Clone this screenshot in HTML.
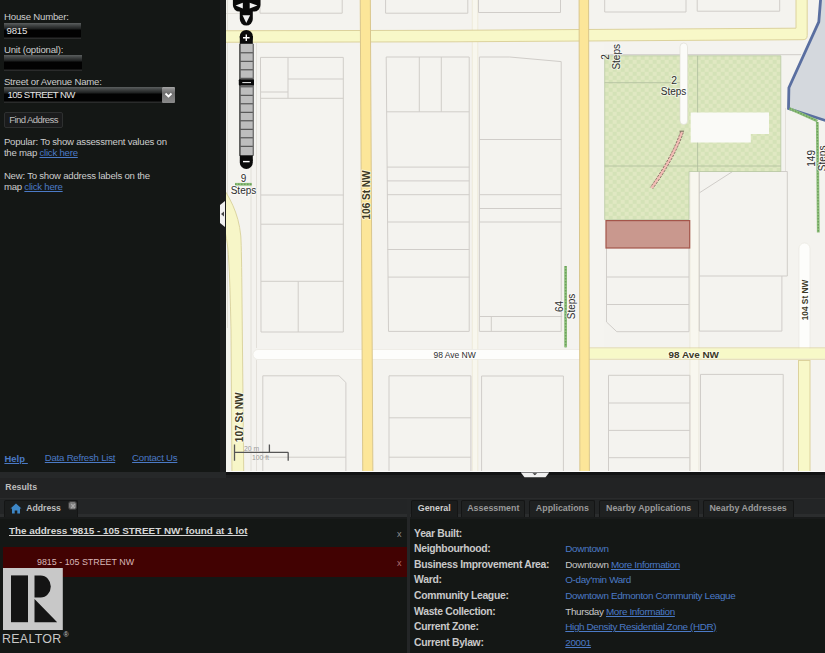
<!DOCTYPE html>
<html><head><meta charset="utf-8">
<style>
html,body{-webkit-font-smoothing:antialiased;margin:0;padding:0;width:825px;height:653px;overflow:hidden;background:#141715;font-family:"Liberation Sans",sans-serif;}
.t{position:absolute;white-space:pre;line-height:14px;}
.t u{text-decoration-thickness:1px;text-underline-offset:1px;}
#left{position:absolute;left:0;top:0;width:220px;height:471.5px;background:#141715;}
#lstrip{position:absolute;left:220px;top:0;width:6px;height:471.5px;background:#1b1c1d;}
.inp{position:absolute;background:linear-gradient(#5b5f5f 0px,#3a3d3d 3px,#1d1f1f 6px,#020202 7px,#020202 14px,#2a2b2b 15px);box-sizing:border-box;border:0;}
.selbtn{position:absolute;background:linear-gradient(#a8a8a8 0,#8c8c8c 2px,#6e6e6e 6px,#8a8a8a 16px);border-radius:1px;}
.btn{position:absolute;box-sizing:border-box;border:1px solid #2e3030;border-radius:2px;background:#1a1b1c;}
#map{position:absolute;left:226px;top:0;width:599px;height:471.5px;overflow:hidden;background:#f4f3ef;}
#gapstrip{position:absolute;left:0;top:471.5px;width:825px;height:6.5px;background:#262829;}
#gapdark{position:absolute;left:226px;top:471.5px;width:599px;height:6.5px;background:linear-gradient(#121314 0,#121314 2.5px,#1f2021 2.5px);}

#reshdr{position:absolute;left:0;top:478px;width:825px;height:20.5px;background:#222324;border-bottom:1px solid #2a2b2c;box-sizing:border-box;}
#tabsL{position:absolute;left:0;top:499px;width:407px;height:19.5px;background:linear-gradient(#232526 0,#232526 15.5px,#2b2d2e 15.5px,#2b2d2e 18px,#191b1b 18px);}
#tabsR{position:absolute;left:410px;top:499px;width:415px;height:19.5px;background:linear-gradient(#232526 0,#232526 15.5px,#2b2d2e 15.5px,#2b2d2e 18px,#191b1b 18px);}
#contL{position:absolute;left:0;top:518.5px;width:407px;height:135px;background:#141715;}
#contR{position:absolute;left:410px;top:518.5px;width:415px;height:135px;background:#141715;}
#divider{position:absolute;left:407px;top:499px;width:3px;height:154px;background:#242627;}
.tab{position:absolute;box-sizing:border-box;border:1px solid #141515;border-bottom:0;border-radius:2px 2px 0 0;background:#1f2121;}
.tab.sel{background:#1b1d1d;}
</style></head><body>
<div id="left"></div><div id="lstrip"></div>
<div style="position:absolute;left:220px;top:201px;width:5px;height:26px;background:#f0f0f0;clip-path:polygon(0 4px,100% 0,100% 100%,0 calc(100% - 4px));"></div>
<svg style="position:absolute;left:220px;top:210px" width="5" height="8"><path d="M1 4 L4 1.5 L4 6.5Z" fill="#444"/></svg>
<div class="t " style="left:4.10px;top:10.37px;font-size:9.6px;font-weight:400;color:#cdcdcd;letter-spacing:-0.2px;">House Number:</div>
<div class="inp" style="left:4px;top:23px;width:77px;height:16px"></div><div class="t " style="left:6.50px;top:24.37px;font-size:9.6px;font-weight:400;color:#e6e6e6;letter-spacing:-0.2px;">9815</div>
<div class="t " style="left:4.00px;top:42.57px;font-size:9.6px;font-weight:400;color:#cdcdcd;letter-spacing:-0.2px;">Unit (optional):</div>
<div class="inp" style="left:4px;top:55px;width:78px;height:16px"></div><div class="t " style="left:3.90px;top:74.57px;font-size:9.6px;font-weight:400;color:#cdcdcd;letter-spacing:-0.2px;">Street or Avenue Name:</div>
<div class="inp" style="left:4px;top:87px;width:158px;height:16px"></div><div class="selbtn" style="left:161.5px;top:86.5px;width:13px;height:16.5px"><svg width="13" height="16" style="position:absolute;left:0;top:0"><path d="M3.5 6.5 L6.5 9.5 L9.5 6.5" stroke="#fff" stroke-width="1.8" fill="none"/></svg></div><div class="t " style="left:7.60px;top:87.67px;font-size:9.6px;font-weight:400;color:#e6e6e6;letter-spacing:-0.6px;">105 STREET NW</div>
<div class="btn" style="left:4px;top:111.5px;width:59px;height:16px"></div><div class="t " style="left:9.20px;top:112.67px;font-size:9.6px;font-weight:400;color:#bdbdbd;letter-spacing:-0.6px;">Find Address</div>
<div class="t " style="left:3.90px;top:135.37px;font-size:9.6px;font-weight:400;color:#cdcdcd;letter-spacing:-0.22px;">Popular: To show assessment values on</div>
<div class="t " style="left:3.90px;top:146.27px;font-size:9.6px;font-weight:400;color:#cdcdcd;letter-spacing:-0.22px;">the map <u style="color:#4b7ac6">click here</u></div>
<div class="t " style="left:3.90px;top:169.17px;font-size:9.6px;font-weight:400;color:#cdcdcd;letter-spacing:-0.22px;">New: To show address labels on the</div>
<div class="t " style="left:3.90px;top:179.67px;font-size:9.6px;font-weight:400;color:#cdcdcd;letter-spacing:-0.22px;">map <u style="color:#4b7ac6">click here</u></div>
<div class="t " style="left:4.40px;top:451.54px;font-size:9.4px;font-weight:700;color:#4b7ac6;letter-spacing:0.1px;"><u>Help&nbsp;</u></div>
<div class="t " style="left:44.80px;top:451.47px;font-size:9.6px;font-weight:400;color:#4b7ac6;letter-spacing:-0.22px;"><u>Data Refresh List</u></div>
<div class="t " style="left:132.10px;top:451.47px;font-size:9.6px;font-weight:400;color:#4b7ac6;letter-spacing:-0.22px;"><u>Contact Us</u></div>

<div id="map">
<svg style="position:absolute;left:-226px;top:0" width="825" height="472" viewBox="0 0 825 472">
<defs>
<pattern id="park" width="8" height="8" patternUnits="userSpaceOnUse" x="604.7" y="55.8">
<rect width="8" height="8" fill="#d4e2b7"/>
<rect width="4" height="4" fill="#e0e8c2"/>
<rect x="4" y="4" width="4" height="4" fill="#e0e8c2"/>
</pattern>
</defs>
<!-- faint sidewalk lines -->
<g stroke="#dedbd4" stroke-width="0.8" fill="none">
<path d="M227.5 0 V328"/>
<path d="M251 43 V471"/>
<path d="M256.5 43 V348 M256.5 360 V471"/>
<path d="M226 13.5 H242"/>
<path d="M785.5 108 V172"/>
</g>
<!-- alleys -->
<rect x="472.3" y="-2" width="5.5" height="480" fill="#f8f7ee"/>
<path d="M472.3 0 V471 M477.8 0 V471" stroke="#ebe7d3" stroke-width="0.7"/>
<rect x="689.9" y="171.5" width="9" height="300" fill="#f8f7ef"/>
<path d="M689.9 171.5 V471 M698.9 171.5 V471" stroke="#e7e3d6" stroke-width="0.7"/>
<rect x="590" y="43" width="14" height="305" fill="#f5f4f0"/>
<!-- blocks -->
<g stroke="#d0cdc9" stroke-width="1" fill="none">
<!-- col A -->
<path d="M260 -2 V13.2 H342.2 V-2"/>
<path d="M260.5 57.4 H343.3 V332 H261 Z"/>
<path d="M288 57.4 V98.3 M260.5 92 H288 M288 79 H343.3 M260.5 98.3 H343.3 M261 195 H343.6 M261 224.2 H343.6 M261 281.3 H343.6 M298.2 281.3 V332"/>
<path d="M262.8 480 V375.8 H339 L345.9 382.5 V480"/>
<path d="M262.8 457.2 H345.9"/>
<!-- col B -->
<path d="M385.6 -2 V13.2 H467.8 V-2"/>
<path d="M386.2 57 H469.2 V331.4 H388.5 Z"/>
<path d="M419.3 57 V111.8 M441.3 57 V111.8 M386.5 111.8 H469.2 M387 167.1 H469.3 M387 180.9 H469.3 M387 194.7 H469.3 M387.5 222 H469.3 M387.5 249.5 H469.3 M388 277.1 H469.5"/>
<path d="M389 480 V375.8 H470.9 V480 M389 417.8 H470.9 M389 457.2 H470.9"/>
<!-- col C -->
<path d="M478.5 -2 V12.5 H560.5 V-2"/>
<path d="M479.4 331.4 V57 H509.7 L561.2 61.6 V331.4 Z"/>
<path d="M479.6 139.5 H561.5 M479.6 194.7 H561.5 M479.6 208.5 H561.5 M479.6 222 H562 M480 316.5 H562.2 M491.3 316.5 V331.4"/>
<path d="M481.6 480 V376 H563.4 V480"/>
<!-- col D -->
<path d="M604.7 -2 V12 H686 V-2"/>
<path d="M606.5 248 V322 L616.8 331.7 H689 V248"/>
<path d="M606.5 277 H689 M606.5 304.5 H689"/>
<path d="M608.5 480 V375.3 H689.9 V480 M608.5 403 H689.9 M608.5 430.4 H689.9 M608.5 457.7 H689.9"/>
<!-- col E -->
<path d="M697.2 -2 V11.2 H779.7 V-2"/>
<path d="M699.3 331.1 V171.5 H787.3 V276 H699.3 M781.9 276 V331.1 H699.3"/>
<path d="M699.3 192.9 L732.6 171.5"/>
<path d="M700.5 480 V374.4 H783.2 V480"/>
<path d="M604.7 54.7 H801"/>
</g>
<!-- park -->
<path d="M604.7 55.8 H780.8 V171.5 H689 V219.7 H604.7 Z" fill="url(#park)" stroke="#b9c9a3" stroke-width="0.8"/>
<path d="M604.7 82.7 H687 M604.7 166 H780.8 M697.6 55.8 V171.5" stroke="#aebd9d" stroke-width="0.8" fill="none"/>
<path d="M690.7 112.6 H769 V134 H750.8 V142.5 H690.7 Z" fill="#fafaf7"/>
<rect x="680" y="43" width="7.5" height="81.5" rx="3.7" fill="#fbfbf8" stroke="#dcdad2" stroke-width="0.6"/>
<!-- red lot -->
<rect x="606" y="220.6" width="83.7" height="27.4" fill="#c9988e" stroke="#a4554a" stroke-width="1.2"/>
<!-- roads -->
<path d="M200 30.8 L455 30.3 L715 28.7 L796 28.2 V-5 H807.2 V35.5 Q807.2 39.7 803 39.7 L715 40.2 L455 41.8 L200 42.3 Z" fill="#f8f8c8" stroke="#dcd29c" stroke-width="1"/>
<rect x="253" y="349.5" width="340" height="10" rx="5" fill="#fdfdfb" stroke="#e8e5dd" stroke-width="0.6"/>
<rect x="799" y="243" width="11" height="110" rx="5.5" fill="#fdfdfb" stroke="#e8e5dd" stroke-width="0.6"/>
<path d="M585 348 H830 M585 359.1 H830" stroke="#dcd29c" stroke-width="1"/>
<rect x="585" y="348.5" width="245" height="10.1" fill="#f7f9c8"/>
<rect x="798.5" y="360.5" width="11.5" height="120" fill="#f8f8c8" stroke="#dcd29c" stroke-width="1"/>
<path d="M219 182 C229 196 238.5 212 240.8 236 Q241.6 250 242 300 L243.8 480 L232 480 L231 330 Q230 280 228.7 260 C228 245 226 232 221 218 Z" fill="#f7f6c8" stroke="#d8d09a" stroke-width="0.9"/>
<path d="M360.2 -5 L370.3 -5 L372.9 480 L362.8 480 Z" fill="#fce699" stroke="#d9c68c" stroke-width="1"/>
<path d="M579.1 -5 L588.6 -5 L589.4 480 L579.9 480 Z" fill="#fce699" stroke="#d9c68c" stroke-width="1"/>
<!-- blue polygon -->
<path d="M820.8 -3 L818.8 21.9 L788.9 87.7 L788.5 108.6 L830 122 L830 -3 Z" fill="#d4d8dd" stroke="#5a6fa0" stroke-width="2.8"/>
<!-- steps -->
<g stroke="#8fc07c" stroke-width="2.8" fill="none">
<path d="M565.6 266 V347.3"/>
<path d="M817.3 122 L818.3 232.6"/>
<path d="M235 184.3 H251.7"/>
<path d="M789.5 108.5 L817.3 121"/>
</g>
<g stroke="#6d9e5c" stroke-width="1.4" stroke-dasharray="1.5 1.5" fill="none">
<path d="M565.6 266 V347.3"/>
<path d="M817.3 122 L818.3 232.6"/>
<path d="M235 184.3 H251.7"/>
<path d="M789.5 108.5 L817.3 121"/>
</g>
<path d="M682 132 Q673 158 651.6 188" stroke="#f2bcb4" stroke-width="3" fill="none"/>
<g stroke="#7d6a5e" stroke-width="0.9" stroke-dasharray="2.2 1.3" fill="none">
<path d="M680.7 131.4 Q671.7 157.4 650.4 187.3"/>
<path d="M683.3 132.6 Q674.3 158.6 652.8 188.7"/>
</g>
<path d="M679.5 131.2 H684" stroke="#7d6a5e" stroke-width="1"/>
<!-- labels -->
<g font-family="Liberation Sans" fill="#2e2e2e" text-anchor="middle" stroke="rgba(255,255,255,0.55)" stroke-width="2" paint-order="stroke" stroke-linejoin="round">
<text transform="translate(370.2 195) rotate(-90)" font-size="10" font-weight="700" fill="#3b3826">106 St NW</text>
<text transform="translate(243.1 417.3) rotate(-90)" font-size="10.2" font-weight="700" fill="#3b3826">107 St NW</text>
<text transform="translate(807.6 300) rotate(-90)" font-size="8.3" font-weight="700" fill="#3b3826">104 St NW</text>
<text transform="translate(563.2 306.5) rotate(-90)" font-size="10">64</text>
<text transform="translate(575.2 306.5) rotate(-90)" font-size="10">Steps</text>
<text transform="translate(608.6 57) rotate(-90)" font-size="10">2</text>
<text transform="translate(620 56.8) rotate(-90)" font-size="10">Steps</text>
<text transform="translate(815.4 158.4) rotate(-90)" font-size="10">149</text>
<text transform="translate(826 158.4) rotate(-90)" font-size="10">Steps</text>
<text x="243.5" y="182" font-size="10" fill="#2e2e2e">9</text>
<text x="243.5" y="193.8" font-size="10" fill="#2e2e2e">Steps</text>
<text x="674.2" y="84" font-size="10.3" fill="#2e2e2e">2</text>
<text x="673.6" y="95.4" font-size="10" fill="#2e2e2e">Steps</text>
<text x="454.6" y="358" font-size="8.5">98 Ave NW</text>
<text x="693.7" y="357.9" font-size="9.9" font-weight="700" fill="#3b3826">98 Ave NW</text>
</g>
<!-- scale bar -->
<g stroke="#555" stroke-width="1.3" fill="none">
<path d="M234.5 444.6 V460.7 M234.5 452.3 H288.2 M269.4 444.6 V452.3 M288.2 452.3 V460.7"/>
</g>
<text x="244" y="450.5" font-family="Liberation Sans" font-size="6.8" fill="#9a9a9a">20 m</text>
<text x="252" y="459.5" font-family="Liberation Sans" font-size="6.8" fill="#9a9a9a">100 ft</text>
<!-- pan control -->
<g fill="#0a0a0a">
<rect x="232.9" y="-14" width="27.6" height="25.6" rx="6.5"/>
<rect x="239.8" y="-5" width="13" height="30.6" rx="6.5"/>
<rect x="239.8" y="29.9" width="13" height="14" rx="6.5"/>
<rect x="239.8" y="36" width="13" height="8"/>
<rect x="239.3" y="43.8" width="14.3" height="112" fill="#222"/>
<rect x="239.8" y="155" width="13" height="14" rx="6.5"/>
<rect x="239.8" y="155" width="13" height="6"/>
</g>
<rect x="240.5" y="43.8" width="12.3" height="111.5" fill="#bdbdbd"/>
<g stroke="#333" stroke-width="0.9">
<path d="M240.5 52.8 H252.8 M240.5 61.3 H252.8 M240.5 69.8 H252.8 M240.5 78.3 H252.8 M240.5 86.8 H252.8 M240.5 95.3 H252.8 M240.5 103.8 H252.8 M240.5 112.3 H252.8 M240.5 120.8 H252.8 M240.5 129.3 H252.8 M240.5 137.8 H252.8 M240.5 146.3 H252.8"/>
</g>
<rect x="238.8" y="79.3" width="15.2" height="6.3" rx="1" fill="#0a0a0a"/>
<path d="M242.3 82.6 H251" stroke="#eee" stroke-width="1"/>
<path d="M243 37.8 H249.6 M246.3 34.5 V41.1" stroke="#fff" stroke-width="1.4"/>
<path d="M243 161.6 H249.6" stroke="#fff" stroke-width="1.4"/>
<g fill="#f2f2f2">
<path d="M235.6 5.5 L242.8 2.7 L242.8 8.4 Z"/>
<path d="M257.4 5.5 L249.7 2.7 L249.7 8.4 Z"/>
<path d="M242.5 15.3 H250.1 L246.3 23 Z"/>
</g>
</svg>

</div>
<div id="gapstrip"></div><div id="gapdark"></div>
<div style="position:absolute;left:226px;top:471px;width:599px;height:1px;background:#fbfbfb"></div>
<svg style="position:absolute;left:520px;top:472px" width="30" height="6"><path d="M0.8 0.5 H29.2 L25.5 5.3 H4.5 Z" fill="#f0f0f0"/><path d="M12.5 1.2 H17.2 L14.85 3.3 Z" fill="#333"/></svg>
<div id="reshdr"></div>
<div id="tabsL"></div><div id="tabsR"></div>
<div id="contL"></div><div id="contR"></div>
<div id="divider"></div>
<div class="t " style="left:5.30px;top:479.65px;font-size:8.8px;font-weight:700;color:#bdbdbd;">Results</div>
<div class="tab sel" style="left:4px;top:500px;width:74px;height:17px"></div><svg style="position:absolute;left:10px;top:503px" width="12" height="11"><path d="M6 0.5 L11.5 5.5 L10 5.5 L10 10.5 L7.3 10.5 L7.3 7.5 L4.7 7.5 L4.7 10.5 L2 10.5 L2 5.5 L0.5 5.5 Z" fill="#3d86c6"/></svg><div class="t " style="left:26.20px;top:501.29px;font-size:8.7px;font-weight:700;color:#bdbdbd;">Address</div>
<div style="position:absolute;left:67.5px;top:500.5px;width:9.5px;height:9.5px;box-sizing:border-box;border:1px solid #3c3c3c;border-radius:3px;background:#7a7a7a"></div><svg style="position:absolute;left:67.5px;top:500.5px" width="10" height="10"><path d="M3.2 3 L6.8 7 M6.8 3 L3.2 7" stroke="#a8a8a8" stroke-width="1.3"/></svg><div class="t " style="left:9.00px;top:524.37px;font-size:9.9px;font-weight:700;color:#d7d7d7;"><u>The address '9815 - 105 STREET NW' found at 1 lot</u></div>
<div class="t " style="left:397.00px;top:527.38px;font-size:9px;font-weight:400;color:#8f8f8f;">x</div>
<div style="position:absolute;left:3px;top:547px;width:404px;height:29.5px;background:#420202"></div><div class="t " style="left:37.00px;top:554.62px;font-size:8.9px;font-weight:400;color:#d9b8b8;">9815 - 105 STREET NW</div>
<div class="t " style="left:397.00px;top:556.38px;font-size:9px;font-weight:400;color:#b07070;">x</div>
<svg style="position:absolute;left:3px;top:568px" width="60" height="62"><rect x="0" y="0" width="59.8" height="62" fill="#c8c8c8"/><rect x="8" y="7.4" width="17" height="46.8" fill="#141414"/><path d="M31.5 7.4 H37.7 A10 11 0 0 1 37.7 29.6 H31.5 Z M31.5 31 L31.5 54.2 L54.2 54.2 Z" fill="#141414"/></svg><div class="t " style="left:2.00px;top:632.40px;font-size:12.4px;font-weight:400;color:#c9c9c9;letter-spacing:0.3px;">REALTOR</div>
<div class="t " style="left:63.50px;top:628.07px;font-size:7px;font-weight:400;color:#c9c9c9;">&reg;</div>
<div class="tab sel" style="left:410.7px;top:499.5px;width:47.2px;height:17px"></div><div class="t" style="left:410.7px;top:500.73px;width:47.2px;text-align:center;font-size:8.85px;font-weight:700;color:#cfcfcf">General</div><div class="tab " style="left:461.3px;top:499.5px;width:64.0px;height:17px"></div><div class="t" style="left:461.3px;top:500.73px;width:64.0px;text-align:center;font-size:8.85px;font-weight:700;color:#9a9a9a">Assessment</div><div class="tab " style="left:529.3px;top:499.5px;width:66.2px;height:17px"></div><div class="t" style="left:529.3px;top:500.73px;width:66.2px;text-align:center;font-size:8.85px;font-weight:700;color:#9a9a9a">Applications</div><div class="tab " style="left:598.5px;top:499.5px;width:100.3px;height:17px"></div><div class="t" style="left:598.5px;top:500.73px;width:100.3px;text-align:center;font-size:8.85px;font-weight:700;color:#9a9a9a">Nearby Applications</div><div class="tab " style="left:702.5px;top:499.5px;width:91.2px;height:17px"></div><div class="t" style="left:702.5px;top:500.73px;width:91.2px;text-align:center;font-size:8.85px;font-weight:700;color:#9a9a9a">Nearby Addresses</div><div class="t " style="left:414.10px;top:526.60px;font-size:10.4px;font-weight:700;color:#c9c9c9;letter-spacing:-0.32px;">Year Built:</div>
<div class="t " style="left:414.10px;top:542.10px;font-size:10.4px;font-weight:700;color:#c9c9c9;letter-spacing:-0.32px;">Neighbourhood:</div>
<div class="t " style="left:565.30px;top:542.27px;font-size:9.9px;font-weight:400;color:#c8c8c8;letter-spacing:-0.36px;"><span style="color:#4b7ac6">Downtown</span></div>
<div class="t " style="left:414.10px;top:557.50px;font-size:10.4px;font-weight:700;color:#c9c9c9;letter-spacing:-0.32px;">Business Improvement Area:</div>
<div class="t " style="left:565.30px;top:557.67px;font-size:9.9px;font-weight:400;color:#c8c8c8;letter-spacing:-0.36px;">Downtown <u style="color:#4b7ac6">More Information</u></div>
<div class="t " style="left:414.10px;top:572.70px;font-size:10.4px;font-weight:700;color:#c9c9c9;letter-spacing:-0.32px;">Ward:</div>
<div class="t " style="left:565.30px;top:572.87px;font-size:9.9px;font-weight:400;color:#c8c8c8;letter-spacing:-0.36px;"><span style="color:#4b7ac6">O-day'min Ward</span></div>
<div class="t " style="left:414.10px;top:589.10px;font-size:10.4px;font-weight:700;color:#c9c9c9;letter-spacing:-0.32px;">Community League:</div>
<div class="t " style="left:565.30px;top:589.27px;font-size:9.9px;font-weight:400;color:#c8c8c8;letter-spacing:-0.36px;"><span style="color:#4b7ac6">Downtown Edmonton Community League</span></div>
<div class="t " style="left:414.10px;top:604.70px;font-size:10.4px;font-weight:700;color:#c9c9c9;letter-spacing:-0.32px;">Waste Collection:</div>
<div class="t " style="left:565.30px;top:604.87px;font-size:9.9px;font-weight:400;color:#c8c8c8;letter-spacing:-0.36px;">Thursday <u style="color:#4b7ac6">More Information</u></div>
<div class="t " style="left:414.10px;top:620.00px;font-size:10.4px;font-weight:700;color:#c9c9c9;letter-spacing:-0.32px;">Current Zone:</div>
<div class="t " style="left:565.30px;top:620.17px;font-size:9.9px;font-weight:400;color:#c8c8c8;letter-spacing:-0.36px;"><u style="color:#4b7ac6">High Density Residential Zone (HDR)</u></div>
<div class="t " style="left:414.10px;top:635.70px;font-size:10.4px;font-weight:700;color:#c9c9c9;letter-spacing:-0.32px;">Current Bylaw:</div>
<div class="t " style="left:565.30px;top:635.87px;font-size:9.9px;font-weight:400;color:#c8c8c8;letter-spacing:-0.36px;"><u style="color:#4b7ac6">20001</u></div>

</body></html>
